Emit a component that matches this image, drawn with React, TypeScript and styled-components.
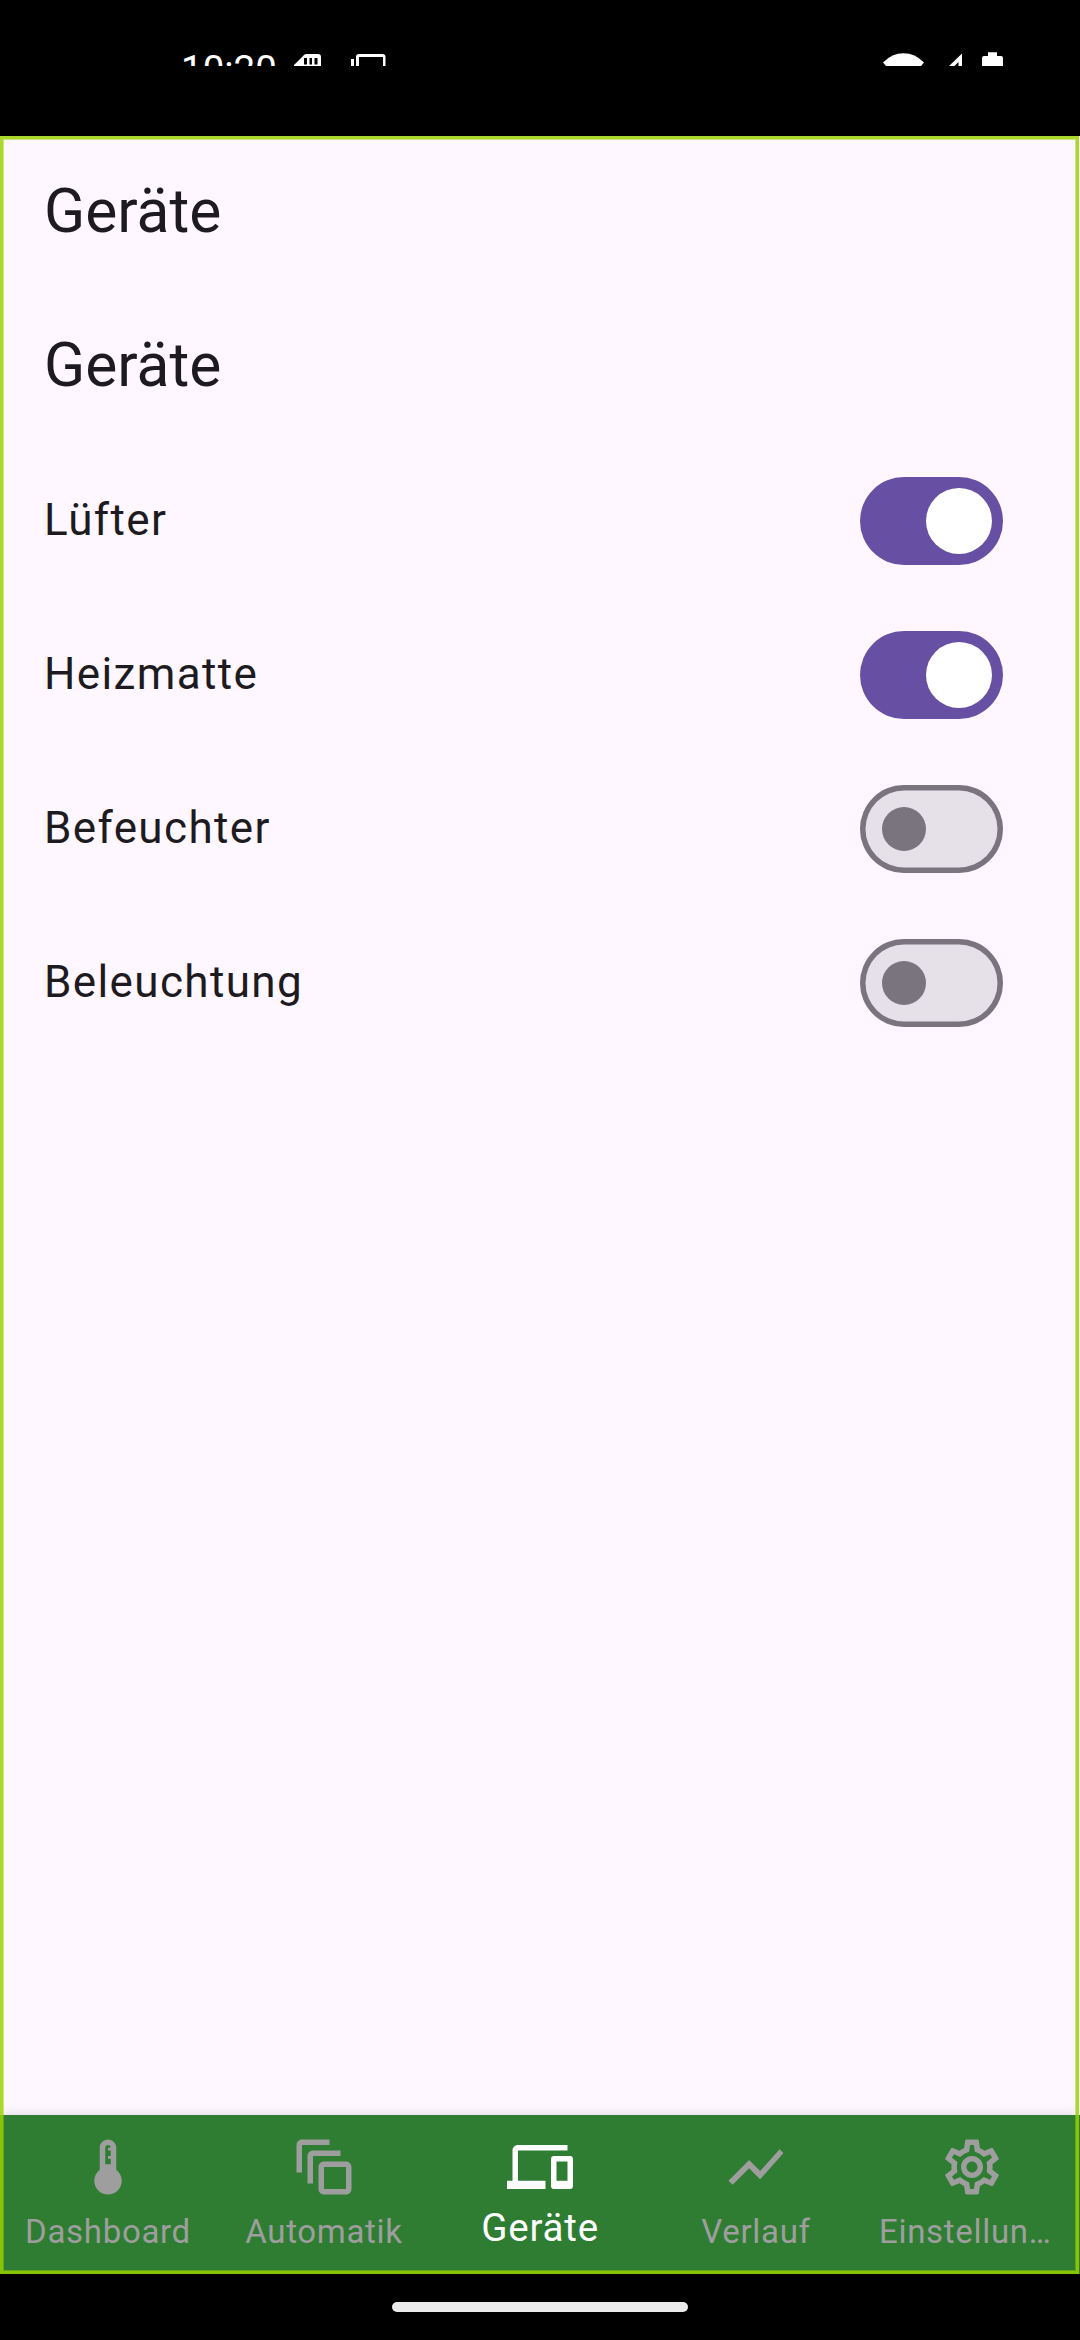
import React from "react";
import styled, { createGlobalStyle } from "styled-components";
import {
  MdDeviceThermostat,
  MdDevices,
  MdShowChart,
  MdOutlineSettings,
} from "react-icons/md";

const GlobalStyle = createGlobalStyle`
  *, *::before, *::after { box-sizing: border-box; }
  body {
    margin: 0;
    background: #000;
    font-family: Roboto, "Noto Sans", sans-serif;
    color: #1d1b20;
  }
`;

const Screen = styled.div`
  width: 1080px;
  height: 2340px;
  display: flex;
  flex-direction: column;
  background: #000;
  overflow: hidden;
`;

const StatusBar = styled.header`
  height: 66px;
  margin-bottom: 70px;
  padding: 0 76px 0 181px;
  display: flex;
  align-items: flex-start;
  justify-content: space-between;
  overflow: hidden;
  color: #fff;
`;

const StatusGroup = styled.div`
  display: flex;
  align-items: flex-start;
`;

const Clock = styled.span`
  width: 113px;
  padding-top: 47px;
  font-size: 38.5px;
  line-height: 45px;
  white-space: nowrap;
`;

const StatusIcon = styled.svg`
  height: 66px;
  display: block;
  fill: currentColor;
`;

const AppFrame = styled.div`
  position: relative;
  height: 2138px;
  display: flex;
  flex-direction: column;
  background: #fef7ff;
`;

const FocusOutline = styled.div`
  position: absolute;
  inset: 0 1px 0 0;
  border: 3px solid rgba(154, 210, 0, 0.83);
  pointer-events: none;

  &::after {
    content: "";
    position: absolute;
    inset: 0;
    border: 1px solid rgba(154, 210, 0, 0.5);
  }
`;

const TopBar = styled.div`
  height: 154px;
  padding: 0 44px 3px;
  display: flex;
  align-items: center;
`;

const Title = styled.h1`
  margin: 0;
  font-size: 60.5px;
  line-height: 77px;
  font-weight: 400;
`;

const Content = styled.main`
  flex: 1;
  min-height: 0;
`;

const DeviceRow = styled.label`
  height: 154px;
  padding: 0 77px 0 44px;
  display: flex;
  align-items: center;
  justify-content: space-between;
`;

const DeviceName = styled.span`
  padding-bottom: 2px;
  font-size: 44px;
  line-height: 66px;
  letter-spacing: 1.375px;
`;

const Track = styled.span<{ $on: boolean }>`
  width: 143px;
  height: 88px;
  padding: ${(p) => (p.$on ? "0 11px" : "0 22px")};
  display: flex;
  align-items: center;
  justify-content: ${(p) => (p.$on ? "flex-end" : "flex-start")};
  border-radius: 44px;
  background: ${(p) => (p.$on ? "#6750a4" : "#e6e0e9")};
  box-shadow: ${(p) => (p.$on ? "none" : "inset 0 0 0 5.5px #79747e")};
`;

const Thumb = styled.span<{ $on: boolean }>`
  width: ${(p) => (p.$on ? 66 : 44)}px;
  height: ${(p) => (p.$on ? 66 : 44)}px;
  border-radius: 50%;
  background: ${(p) => (p.$on ? "#fff" : "#79747e")};
`;

const NavBar = styled.nav`
  height: 159.5px;
  display: grid;
  grid-template-columns: repeat(5, 216px);
  background: #2e7d32;
  box-shadow: 0 -1px 10px rgba(0, 0, 0, 0.12);
`;

const NavItem = styled.div<{ $active: boolean }>`
  padding-top: 19.5px;
  display: flex;
  flex-direction: column;
  align-items: center;
  color: ${(p) => (p.$active ? "#fff" : "#9e9e9e")};

  svg {
    width: 66px;
    height: 66px;
    flex: none;
  }
`;

const NavLabel = styled.span<{ $active: boolean; $truncated: boolean }>`
  width: ${(p) => (p.$truncated ? "186px" : "auto")};
  margin-top: ${(p) => (p.$active ? 5.5 : 9.5)}px;
  font-size: ${(p) => (p.$active ? 38.5 : 33)}px;
  line-height: 44px;
  letter-spacing: ${(p) => (p.$active ? 0.8 : 0.6875)}px;
  white-space: nowrap;
`;

const GestureArea = styled.footer`
  height: 66px;
  display: flex;
  align-items: center;
  justify-content: center;
`;

const GestureHandle = styled.div`
  width: 296px;
  height: 10px;
  border-radius: 5px;
  background: #ebebeb;
`;

function StackedCardsIcon() {
  return (
    <svg viewBox="0 0 24 24" fill="currentColor">
      <path d="M14 2H4c-1.1 0-2 .9-2 2v10h2V4h10V2z" />
      <path d="M18 6H8c-1.100 0-2 .9-2 2v10h2V8h10V6z" />
      <path
        fillRule="evenodd"
        d="M20 10h-8c-1.100 0-2 .9-2 2v8c0 1.100.9 2 2 2h8c1.100 0 2-.9 2-2v-8c0-1.100-.9-2-2-2zM20 20h-8v-8h8v8z"
      />
    </svg>
  );
}

const devices = [
  { name: "Lüfter", on: true },
  { name: "Heizmatte", on: true },
  { name: "Befeuchter", on: false },
  { name: "Beleuchtung", on: false },
];

const tabs = [
  { label: "Dashboard", Icon: MdDeviceThermostat },
  { label: "Automatik", Icon: StackedCardsIcon },
  { label: "Geräte", Icon: MdDevices },
  { label: "Verlauf", Icon: MdShowChart },
  { label: "Einstellun…", Icon: MdOutlineSettings },
];

const activeTab = "Geräte";

export default function App() {
  return (
    <Screen>
      <GlobalStyle />
      <StatusBar>
        <StatusGroup>
          <Clock>10:20</Clock>
          <StatusIcon width="92" viewBox="294 0 92 66">
            <path
              fillRule="evenodd"
              d="M294 66 L294 65 L304.500 54.500 Q305 54 306 54 H318 Q321 54 321 57 V66 Z M304 58 V64.500 H307 V58 Z M309.500 58 V64.500 H312 V58 Z M314.500 58 V64.500 H317.500 V58 Z"
            />
            <path d="M351 59 H354 V66 H351 Z M356 66 V57 Q356 54 359 54 H382.500 Q385.500 54 385.500 57 V66 H383 V57 H359 V66 Z" />
          </StatusIcon>
        </StatusGroup>
        <StatusIcon width="121" viewBox="883 0 121 66">
          <path d="M883 62.500 Q892 53.300 903.500 53.300 Q915 53.300 924 62.500 L921 66 H886 Z" />
          <path fillRule="evenodd" d="M949 66 L962 53.500 V66 H958.500 V62 L954.500 66 Z" />
          <path d="M982 66 V58 Q982 56 984 56 H988 V52.300 H997 V56 H1001 Q1003 56 1003 58 V66 Z" />
        </StatusIcon>
      </StatusBar>

      <AppFrame>
        <TopBar>
          <Title>Geräte</Title>
        </TopBar>
        <Content>
          <TopBar>
            <Title as="h2">Geräte</Title>
          </TopBar>
          {devices.map((d) => (
            <DeviceRow key={d.name}>
              <DeviceName>{d.name}</DeviceName>
              <Track $on={d.on} role="switch" aria-checked={d.on}>
                <Thumb $on={d.on} />
              </Track>
            </DeviceRow>
          ))}
        </Content>
        <NavBar>
          {tabs.map(({ label, Icon }) => (
            <NavItem key={label} $active={label === activeTab}>
              <Icon />
              <NavLabel $active={label === activeTab} $truncated={label.endsWith("…")}>
                {label}
              </NavLabel>
            </NavItem>
          ))}
        </NavBar>
        <FocusOutline />
      </AppFrame>

      <GestureArea>
        <GestureHandle />
      </GestureArea>
    </Screen>
  );
}
